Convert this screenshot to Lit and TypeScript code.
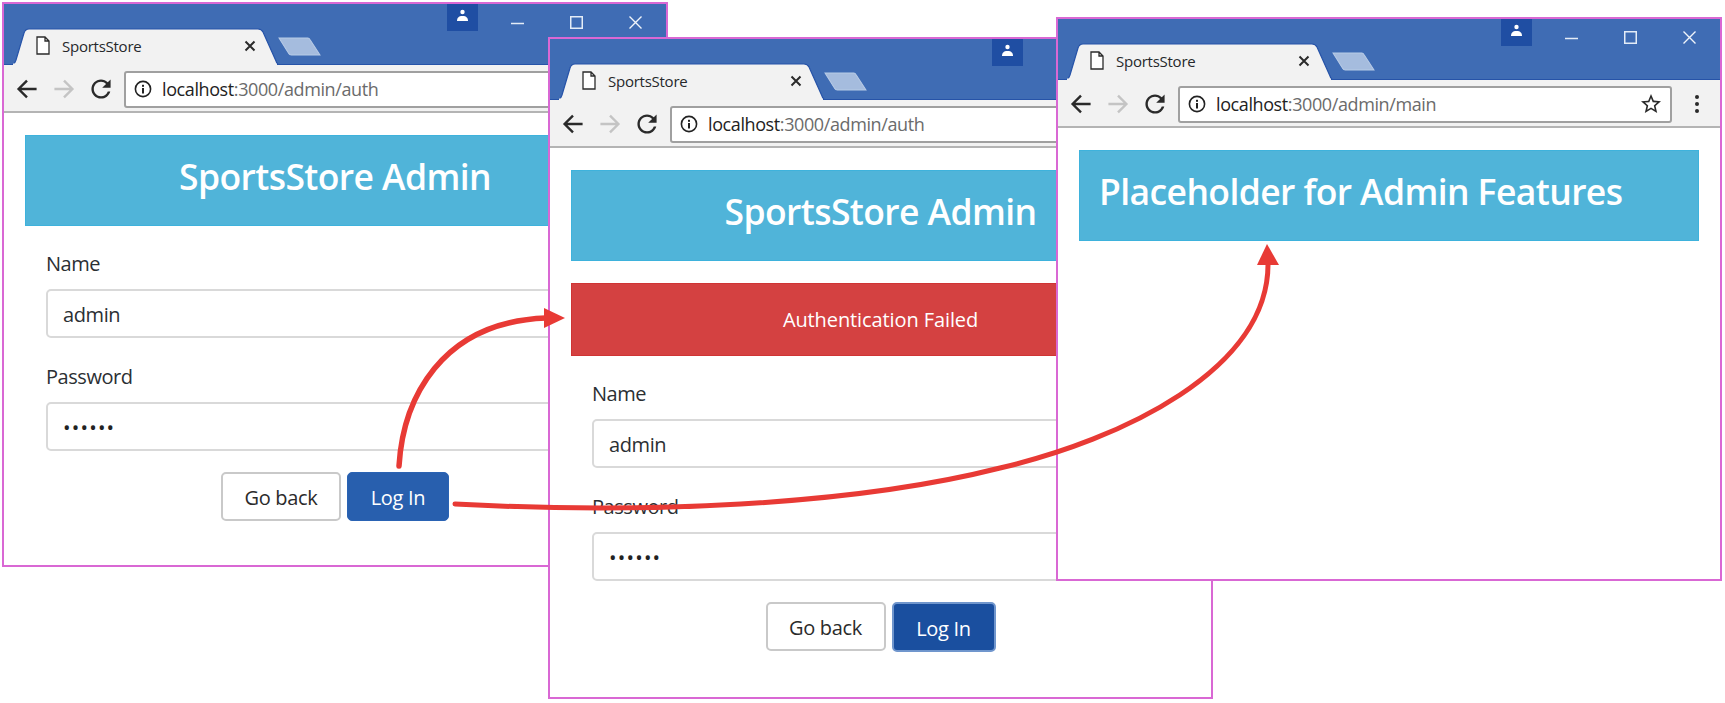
import { LitElement, html, css, svg } from "lit";
import { customElement, property } from "lit/decorators.js";

const backIcon = svg`<path d="M20 12H5M12 5l-7 7 7 7" fill="none" stroke="currentColor" stroke-width="2"/>`;
const fwdIcon = svg`<path d="M4 12h15M12 5l7 7-7 7" fill="none" stroke="currentColor" stroke-width="2"/>`;
const reloadIcon = svg`<path fill="currentColor" d="M17.65 6.35C16.2 4.9 14.21 4 12 4c-4.42 0-7.99 3.58-7.99 8s3.57 8 7.99 8c3.73 0 6.84-2.55 7.73-6h-2.08c-.82 2.33-3.04 4-5.65 4-3.31 0-6-2.69-6-6s2.69-6 6-6c1.66 0 3.14.69 4.22 1.78L13 11h7V4l-2.35 2.35z"/>`;
const starIcon = svg`<path fill="currentColor" d="M22 9.24l-7.19-.62L12 2 9.19 8.63 2 9.24l5.46 4.73L5.82 21 12 17.27 18.18 21l-1.63-7.03L22 9.24zM12 15.4l-3.76 2.27 1-4.28-3.32-2.88 4.38-.38L12 6.1l1.71 4.04 4.38.38-3.32 2.88 1 4.28L12 15.4z"/>`;

@customElement("browser-window")
class BrowserWindow extends LitElement {
  @property() url = "";
  @property({ type: Boolean }) star = false;

  static styles = css`
    :host {
      display: flex;
      flex-direction: column;
      box-sizing: border-box;
      border: 2px solid #d968d4;
      background: #fff;
      font-family: "Open Sans", "Noto Sans", "Liberation Sans", sans-serif;
      color: #2b2f33;
    }
    .titlebar {
      height: 61px;
      flex: none;
      box-sizing: border-box;
      display: flex;
      align-items: flex-end;
      padding: 0 24px 0 7px;
      background: #3f6cb4;
      border-bottom: 1px solid #2653a8;
    }
    .tab {
      position: relative;
      width: 268px;
      height: 37px;
      margin-bottom: -1px;
      flex: none;
      box-sizing: border-box;
      display: flex;
      align-items: center;
      gap: 12px;
      padding: 0 23px 2px 25px;
      color: #222;
    }
    .tab-shape {
      position: absolute;
      inset: 0;
      width: 100%;
      height: 100%;
    }
    .doc, .tab-title, .tab-close { position: relative; }
    .doc { width: 14px; height: 19px; flex: none; }
    .tab-title {
      flex: 1;
      font-size: 15px;
      letter-spacing: -0.25px;
      color: #26282b;
    }
    .tab-close { width: 12px; height: 12px; flex: none; }
    .newtab {
      width: 43px;
      height: 19px;
      flex: none;
      margin: 0 0 8px -1px;
    }
    .spacer { flex: 1; }
    .controls {
      align-self: flex-start;
      display: flex;
      align-items: flex-start;
      gap: 46px;
    }
    .badge {
      width: 31px;
      height: 27px;
      margin-right: -13px;
      background: #1f4ea3;
      display: flex;
      align-items: flex-start;
      justify-content: center;
      padding-top: 5px;
      box-sizing: border-box;
    }
    .badge svg { width: 13px; height: 13px; }
    .ctl { width: 13px; height: 13px; margin-top: 12px; display: block; }
    .toolbar {
      height: 48px;
      flex: none;
      box-sizing: border-box;
      display: flex;
      align-items: center;
      gap: 13px;
      padding: 2px 11px 0 11px;
      background: #f2f2f2;
      border-bottom: 2px solid #b4b4b4;
    }
    .tool { width: 24px; height: 24px; flex: none; color: #2a2a2a; }
    .tool.off { color: #c4c4c4; }
    .address {
      flex: 1;
      height: 37px;
      box-sizing: border-box;
      margin-left: -2px;
      display: flex;
      align-items: center;
      padding: 0 7px 0 8px;
      background: #fff;
      border: 2px solid #a0a0a0;
      border-radius: 3px;
      font-size: 18px;
      letter-spacing: -0.4px;
    }
    .info { width: 18px; height: 18px; flex: none; margin-right: 10px; }
    .host { color: #222; }
    .path { color: #6b6b6b; }
    .grow { flex: 1; }
    .star { width: 24px; height: 24px; color: #2a2a2a; }
    .dots { width: 24px; height: 24px; flex: none; }
    .content {
      flex: 1;
      min-height: 0;
      padding: 22px 21px 0;
    }
  `;

  render() {
    return html`
      <div class="titlebar">
        <div class="tab">
          <svg class="tab-shape" viewBox="0 0 268 37">
            <path d="M0 37 C3 37 4 35 5 32 L13 5 C14 2 15 1 18 1 L247 1 C250 1 251 2 252 4 L265 33 C266 36 267 37 268 37Z" fill="#f2f2f2" stroke="#2653a8" stroke-width="1.2"/>
            <rect x="2" y="35.5" width="264" height="2" fill="#f2f2f2"/>
          </svg>
          <svg class="doc" viewBox="0 0 14 19">
            <path d="M1 1h8l4 4v13H1z M9 1v4h4" fill="#fff" stroke="#2b2b2b" stroke-width="1.3"/>
          </svg>
          <span class="tab-title">SportsStore</span>
          <svg class="tab-close" viewBox="0 0 12 12">
            <path d="M1.500 1.500l9 9M10.500 1.500l-9 9" stroke="#2b2b2b" stroke-width="2"/>
          </svg>
        </div>
        <svg class="newtab" viewBox="0 0 42 19" preserveAspectRatio="none">
          <path d="M1 1h28c1 0 2 1 2.500 2L41 18H13c-1 0-2-.5-2.500-1.500z" fill="#a5bcde" stroke="#b8cbe6" stroke-width="1"/>
        </svg>
        <div class="spacer"></div>
        <div class="controls">
          <div class="badge">
            <svg viewBox="0 0 13 13"><circle cx="6.500" cy="3" r="2.200" fill="#fff"/><path d="M1 12c0-3 1.500-5 5.500-5s5.500 2 5.500 5z" fill="#fff"/></svg>
          </div>
          <svg class="ctl" viewBox="0 0 13 13"><path d="M0 7.500h13" stroke="#e4ecf7" stroke-width="1.500"/></svg>
          <svg class="ctl" viewBox="0 0 13 13"><rect x=".75" y=".75" width="11.500" height="11.500" fill="none" stroke="#e4ecf7" stroke-width="1.500"/></svg>
          <svg class="ctl" viewBox="0 0 13 13"><path d="M.5.5l12 12M12.500.5l-12 12" stroke="#f0f4fa" stroke-width="1.400"/></svg>
        </div>
      </div>
      <div class="toolbar">
        <svg class="tool" viewBox="2 2 20 20">${backIcon}</svg>
        <svg class="tool off" viewBox="2 2 20 20">${fwdIcon}</svg>
        <svg class="tool" viewBox="2 2 20 20">${reloadIcon}</svg>
        <div class="address">
          <svg class="info" viewBox="0 0 18 18">
            <circle cx="9" cy="9" r="7.600" fill="none" stroke="#222" stroke-width="1.600"/>
            <rect x="8" y="8" width="2" height="5.500" fill="#222"/>
            <rect x="8" y="4.800" width="2" height="2" fill="#222"/>
          </svg>
          <span class="host">localhost</span><span class="path">:${this.url}</span>
          <span class="grow"></span>
          ${this.star ? html`<svg class="star" viewBox="0 0 24 24">${starIcon}</svg>` : ""}
        </div>
        <svg class="dots" viewBox="0 0 24 24">
          <circle cx="12" cy="5" r="2" fill="#2a2a2a"/>
          <circle cx="12" cy="12" r="2" fill="#2a2a2a"/>
          <circle cx="12" cy="19" r="2" fill="#2a2a2a"/>
        </svg>
      </div>
      <div class="content"><slot></slot></div>
    `;
  }
}

@customElement("auth-form")
class AuthForm extends LitElement {
  @property({ type: Boolean }) focused = false;

  static styles = css`
    :host {
      display: block;
      padding: 22px 21px 0;
      font-family: "Open Sans", "Noto Sans", "Liberation Sans", sans-serif;
      color: #2b2f33;
    }
    label {
      display: block;
      font-size: 20px;
      line-height: 30px;
      letter-spacing: -0.45px;
      padding-top: 1px;
      margin-bottom: 10px;
    }
    .field {
      box-sizing: border-box;
      height: 49px;
      margin-bottom: 23px;
      display: flex;
      align-items: center;
      padding: 1px 15px 0;
      border: 2px solid #d9d9d9;
      border-radius: 5px;
      background: #fff;
      font-size: 20px;
      letter-spacing: -0.4px;
    }
    .field.pw { font-size: 20px; letter-spacing: 1.2px; color: #222; }
    .actions {
      display: flex;
      justify-content: center;
      gap: 6px;
      margin-top: -2px;
    }
    .btn {
      box-sizing: border-box;
      height: 49px;
      display: flex;
      align-items: center;
      justify-content: center;
      padding-top: 2px;
      border-radius: 5px;
      font-size: 20px;
      letter-spacing: -0.3px;
    }
    .back {
      width: 120px;
      border: 2px solid #c9c9c9;
      background: #fff;
      color: #2b2b2b;
    }
    .login {
      width: 102px;
      background: #285fae;
      border: 1px solid #2a63b4;
      color: #fff;
    }
    .login.focused {
      width: 104px;
      height: 50px;
      background: #1a4f9f;
      border: 2px solid #7096cd;
    }
  `;

  render() {
    return html`
      <label>Name</label>
      <div class="field">admin</div>
      <label>Password</label>
      <div class="field pw">••••••</div>
      <div class="actions">
        <div class="btn back">Go back</div>
        <div class="btn login ${this.focused ? "focused" : ""}">Log In</div>
      </div>
    `;
  }
}

@customElement("app-root")
class AppRoot extends LitElement {
  static styles = css`
    :host {
      display: block;
      position: relative;
      width: 1725px;
      height: 703px;
      overflow: hidden;
      background: #fff;
      font-family: "Open Sans", "Noto Sans", "Liberation Sans", sans-serif;
    }
    browser-window { position: absolute; }
    .w1 { left: 2px; top: 2px; width: 666px; height: 565px; }
    .w2 { left: 548px; top: 37px; width: 665px; height: 662px; }
    .w3 { left: 1056px; top: 17px; width: 666px; height: 564px; }
    .jumbo {
      box-sizing: border-box;
      height: 91px;
      display: flex;
      align-items: center;
      padding: 0 19px 10px;
      background: #50b4d9;
      border: 1px solid #3eb2dc;
      color: #fff;
      font-size: 35.5px;
      font-weight: 600;
      letter-spacing: -0.6px;
    }
    .center { justify-content: center; }
    .alert {
      box-sizing: border-box;
      height: 73px;
      margin-top: 22px;
      display: flex;
      align-items: center;
      justify-content: center;
      background: #d44141;
      border: 1px solid #cf3434;
      color: #fff;
      font-size: 20px;
      letter-spacing: -0.1px;
    }
    .arrows {
      position: absolute;
      inset: 0;
      width: 1725px;
      height: 703px;
      pointer-events: none;
    }
  `;

  render() {
    return html`
      <browser-window class="w1" url="3000/admin/auth">
        <div class="jumbo center">SportsStore Admin</div>
        <auth-form></auth-form>
      </browser-window>
      <browser-window class="w2" url="3000/admin/auth">
        <div class="jumbo center">SportsStore Admin</div>
        <div class="alert">Authentication Failed</div>
        <auth-form focused></auth-form>
      </browser-window>
      <browser-window class="w3" url="3000/admin/main" star>
        <div class="jumbo">Placeholder for Admin Features</div>
      </browser-window>
      <svg class="arrows" viewBox="0 0 1725 703">
        <path d="M399 466 C403 400 440 322 546 318" fill="none" stroke="#e83a35" stroke-width="5.500" stroke-linecap="round"/>
        <path d="M565 318 L544 308 L544 328 Z" fill="#e83a35"/>
        <path d="M455 504 C640 514 850 506 1000 468 C1120 440 1270 370 1268 262" fill="none" stroke="#e83a35" stroke-width="5" stroke-linecap="round"/>
        <path d="M1267 244 L1257 265 L1279 265 Z" fill="#e83a35"/>
      </svg>
    `;
  }
}
